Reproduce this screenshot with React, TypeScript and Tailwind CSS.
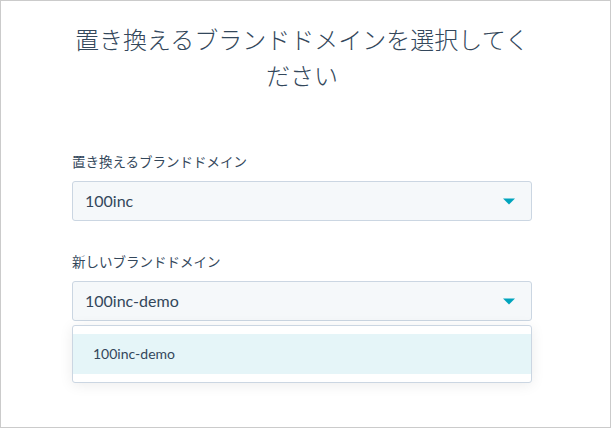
const font = { fontFamily: 'Lato, "Noto Sans CJK JP", sans-serif' }

function Caret() {
  return (
    <svg width="12" height="7" viewBox="0 0 12 7" className="shrink-0">
      <path d="M0 0.5 L12 0.5 L6 6.5 Z" fill="#00a4bd" />
    </svg>
  )
}

function SelectBox({ value }: { value: string }) {
  return (
    <div className="flex items-center justify-between h-10 pl-3 pr-4 bg-[#f5f8fa] border border-[#cbd6e2] rounded-[3px] text-base text-[#33475b]">
      <span>{value}</span>
      <Caret />
    </div>
  )
}

export default function App() {
  return (
    <div className="w-[611px] h-[428px] bg-white border border-[#cbcbcb] text-[#33475b]" style={font}>
      <div className="w-[460px] ml-[71px] pt-[21px]">
        <h1 className="text-center text-[24px] leading-[36px] font-light text-[#33475b]">
          置き換えるブランドドメインを選択してください
        </h1>

        <div className="mt-[58px]">
          <div className="text-[13.5px] leading-5 mb-[9px]">置き換えるブランドドメイン</div>
          <SelectBox value="100inc" />
        </div>

        <div className="mt-[31px]">
          <div className="text-[13.5px] leading-5 mb-[9px]">新しいブランドドメイン</div>
          <SelectBox value="100inc-demo" />
          <div className="relative">
            <div className="absolute left-0 right-0 top-[4px] bg-white border border-[#cbd6e2] rounded-[3px] py-2 shadow-[0_2px_14px_rgba(0,0,0,0.08)]">
              <div className="h-10 flex items-center pl-5 bg-[#e5f5f8] text-sm text-[#33475b]">100inc-demo</div>
            </div>
          </div>
        </div>
      </div>
    </div>
  )
}
